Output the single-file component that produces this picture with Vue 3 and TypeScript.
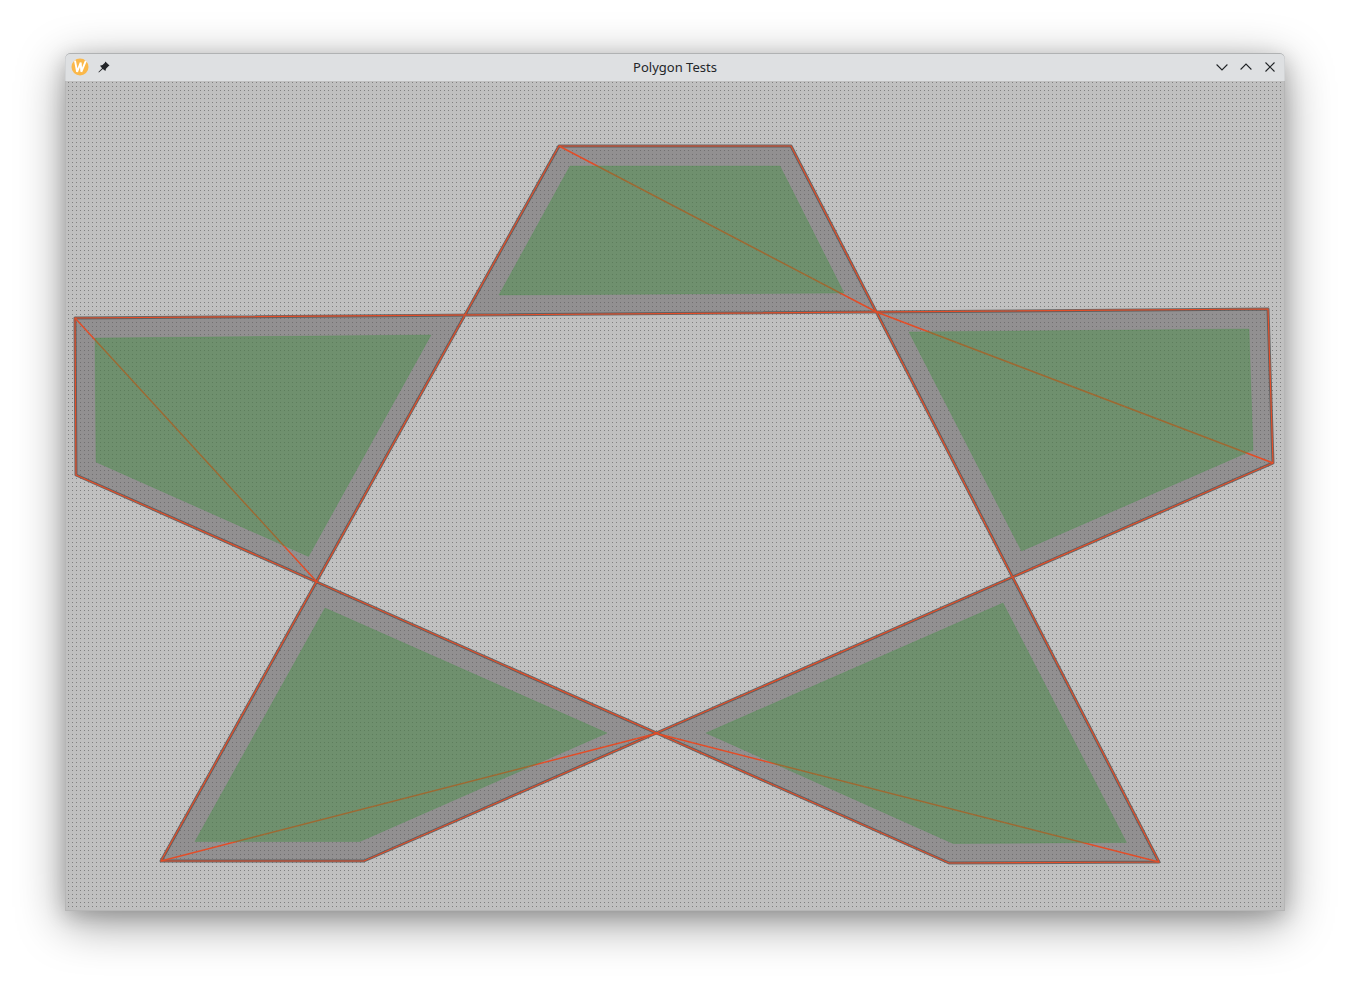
<script setup lang="ts">
interface Shape { outer: string; inner: string; diagonal: string }

const shapes: Shape[] = [
  { outer: '559,146 791,146 876.5,312 465,315', inner: '570,166 780,166 844,293 499,295', diagonal: 'M559 146 876.5 312' },
  { outer: '75,318 465,315 317,582 76,475', inner: '95,338 431,335 308.5,556.5 96,462', diagonal: 'M75 318 317 582' },
  { outer: '876.5,312 1268,309 1273,463 1013,577', inner: '909,332 1249,329 1253,450 1021.5,551', diagonal: 'M876.5 312 1273 463' },
  { outer: '317,582 656.5,733.5 364,861 161,861', inner: '325,608 607,733 360,841.5 195,841.5', diagonal: 'M161 861 656.5 733.5' },
  { outer: '1013,577 1159,862 949,863 656.5,733.5', inner: '1003,603 1126.5,842.5 953,843.5 706,733', diagonal: 'M656.5 733.5 1159 862' },
]
const outline = 'M559 146H791L1159 862 949 863 76 475 75 318 1268 309 1273 463 364 861H161Z'
</script>

<template>
  <main class="desktop">
    <section class="window">
      <header class="titlebar">
        <div class="left">
          <svg class="logo" width="18" height="18" viewBox="0 0 18 18">
            <circle cx="9" cy="9" r="8.5" fill="#fbb849" />
            <path d="M4 2.6 6.1 13.8 9.7 4.6 10.3 13.8 14.8 2.8" fill="none" stroke="#fff" stroke-width="1.9" stroke-linejoin="bevel" />
          </svg>
          <svg width="12" height="12" viewBox="0 0 12 12">
            <path d="M7.3.5 11.5 4.6 10.4 5.2 8 7.7 7.4 10 4.8 7.9.9 11.5.4 11 4.1 7.2 2 4.7 4.5 4 6.9 1.7Z" fill="#232629" />
          </svg>
        </div>
        <h1>Polygon Tests</h1>
        <div class="controls">
          <svg width="12" height="12" viewBox="0 0 12 12"><path d="M.6 3.5 6 8.9 11.4 3.5" /></svg>
          <svg width="12" height="12" viewBox="0 0 12 12"><path d="M.6 8.5 6 3.1 11.4 8.5" /></svg>
          <svg width="12" height="12" viewBox="0 0 12 12"><path d="M1.5 1.5 10.5 10.5M10.5 1.5 1.5 10.5" /></svg>
        </div>
      </header>
      <svg class="canvas" width="1220" height="830" viewBox="65 81 1220 830">
        <defs>
          <pattern id="dots" x="68" y="82" width="4" height="4" patternUnits="userSpaceOnUse">
            <rect width="1" height="1" fill="#808080" shape-rendering="crispEdges" />
          </pattern>
        </defs>
        <rect x="65" y="81" width="1220" height="830" fill="#c0c0c0" />
        <rect x="68" y="82" width="1216" height="828" fill="url(#dots)" />
        <polygon v-for="(s, i) in shapes" :key="'o' + i" :points="s.outer" class="body" />
        <path :d="outline" class="edge" />
        <path :d="outline" class="wire" />
        <path v-for="(s, i) in shapes" :key="'d' + i" :d="s.diagonal" class="wire diagonal" />
        <polygon v-for="(s, i) in shapes" :key="'i' + i" :points="s.inner" class="inset" />
      </svg>
    </section>
  </main>
</template>

<style>
body { margin: 0; background: #fff; overflow: hidden; }
</style>

<style scoped>
.desktop { box-sizing: border-box; width: 1350px; height: 988px; padding: 53px 65px 77px; overflow: hidden; }
.window {
  position: relative;
  width: 1220px;
  height: 858px;
  border-radius: 5px 5px 0 0;
  overflow: hidden;
  box-shadow: 0 12px 48px rgba(0, 0, 0, .4), 0 5px 20px rgba(0, 0, 0, .18);
}
.window::after {
  content: '';
  position: absolute;
  inset: 0;
  border-radius: inherit;
  box-shadow: inset 0 0 0 1px rgba(0, 0, 0, .05), inset 0 1px 0 rgba(0, 0, 0, .16);
}
.titlebar {
  box-sizing: border-box;
  height: 28px;
  padding: 0 9px 0 6px;
  display: grid;
  grid-template-columns: 1fr auto 1fr;
  align-items: center;
  background: #dee0e2;
  color: #232629;
}
.left { display: flex; align-items: center; gap: 9px; }
.logo { flex: none; }
h1 { margin: 0 0 1px 3px; font: 400 13px/18px "Noto Sans", sans-serif; }
.controls { display: flex; justify-content: flex-end; gap: 12px; }
.controls path { fill: none; stroke: #232629; stroke-width: 1.1; }
.canvas { display: block; }
.body { fill: rgba(100, 96, 98, .5); }
.edge { fill: none; stroke: #585858; stroke-opacity: .85; stroke-width: 3; stroke-linejoin: round; }
.wire { fill: none; stroke: #e34d28; stroke-width: 1.2; }
.diagonal { stroke-width: 1.45; }
.inset { fill: rgba(64, 143, 64, .43); stroke: rgba(64, 150, 64, .2); stroke-width: 1; }
</style>
